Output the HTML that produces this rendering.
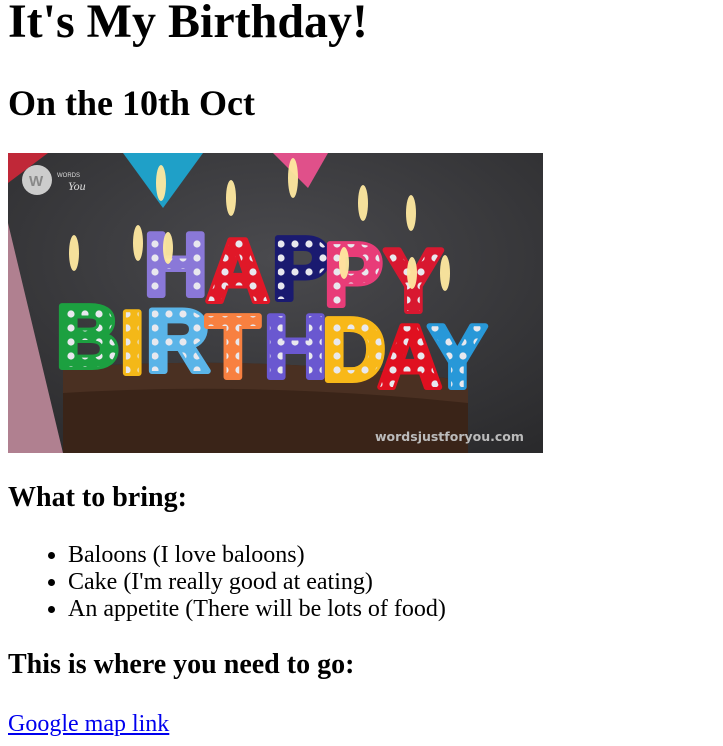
<!DOCTYPE html>
<html><head><style>
html,body{margin:0;padding:0;background:#fff;}
body{width:723px;height:746px;position:relative;overflow:hidden;font-family:"Liberation Serif",serif;color:#000;}
.t{position:absolute;left:8px;line-height:1;white-space:nowrap;margin:0;}
ul{position:absolute;left:8px;top:542px;margin:0;padding-left:60px;font-size:24px;line-height:27px;}
a{color:#0000ee;}
</style></head><body>
<div class="t" style="top:-2px;font-size:48px;font-weight:bold">It's My Birthday!</div>
<div class="t" style="top:85px;font-size:36px;font-weight:bold">On the 10th Oct</div>
<svg style="position:absolute;left:8px;top:153px" width="535" height="300" viewBox="0 0 535 300">
<defs>
<radialGradient id="bg" cx="0.5" cy="0.35" r="0.8"><stop offset="0" stop-color="#4a4a4e"/><stop offset="1" stop-color="#2a2a2c"/></radialGradient>
<pattern id="dots" width="14" height="14" patternUnits="userSpaceOnUse"><circle cx="7" cy="7" r="3.6" fill="#e8e8ee"/></pattern>
</defs>
<rect width="535" height="300" fill="url(#bg)"/>
<polygon points="0,70 55,300 0,300" fill="#b08090"/>
<polygon points="115,0 195,0 155,55" fill="#1fa0c8"/>
<polygon points="265,0 320,0 300,35" fill="#e0508a"/>
<polygon points="0,0 40,0 0,30" fill="#c02838"/>
<path d="M55,215 Q250,200 460,228 L460,300 L55,300 Z" fill="#3a2418"/>
<path d="M55,215 Q250,200 460,228 L460,250 Q250,228 55,240 Z" fill="#4a3022"/>
<circle cx="29" cy="27" r="15" fill="#ccc"/>
<text x="21" y="33" font-family="Liberation Sans" font-size="15" font-weight="bold" fill="#888">W</text>
<text x="49" y="24" font-family="Liberation Sans" font-size="6" fill="#ddd">WORDS</text>
<text x="60" y="37" font-family="Liberation Serif" font-size="12" font-style="italic" fill="#ddd">You</text>
<g font-family="Liberation Sans" font-weight="bold" font-size="88" stroke-width="6" stroke-linejoin="round">
<text x="136" y="142" fill="#8a78d8" stroke="#8a78d8">H</text>
<text x="198" y="148" fill="#e01828" stroke="#e01828">A</text>
<text x="264" y="146" fill="#1a1a70" stroke="#1a1a70">P</text>
<text x="316" y="152" fill="#e83c78" stroke="#e83c78">P</text>
<text x="376" y="158" fill="#d81830" stroke="#d81830">Y</text>
<text x="48" y="214" fill="#1ca040" stroke="#1ca040">B</text>
<text x="112" y="220" fill="#f4b818" stroke="#f4b818">I</text>
<text x="138" y="218" fill="#5ab4e8" stroke="#5ab4e8">R</text>
<text x="198" y="224" fill="#f88040" stroke="#f88040">T</text>
<text x="256" y="224" fill="#6a58d0" stroke="#6a58d0">H</text>
<text x="314" y="227" fill="#f8b818" stroke="#f8b818">D</text>
<text x="370" y="234" fill="#e01020" stroke="#e01020">A</text>
<text x="420" y="234" fill="#2898d8" stroke="#2898d8">Y</text>
</g>
<g font-family="Liberation Sans" font-weight="bold" font-size="88" fill="url(#dots)">
<text x="136" y="142">H</text><text x="198" y="148">A</text><text x="264" y="146">P</text>
<text x="316" y="152">P</text><text x="376" y="158">Y</text><text x="48" y="214">B</text>
<text x="112" y="220">I</text><text x="138" y="218">R</text><text x="198" y="224">T</text>
<text x="256" y="224">H</text><text x="314" y="227">D</text><text x="370" y="234">A</text>
<text x="420" y="234">Y</text>
</g>
<g fill="#ffe9a0" opacity="0.95">
<ellipse cx="66" cy="100" rx="5" ry="18"/><ellipse cx="130" cy="90" rx="5" ry="18"/>
<ellipse cx="153" cy="30" rx="5" ry="18"/><ellipse cx="223" cy="45" rx="5" ry="18"/>
<ellipse cx="285" cy="25" rx="5" ry="20"/><ellipse cx="355" cy="50" rx="5" ry="18"/>
<ellipse cx="403" cy="60" rx="5" ry="18"/><ellipse cx="437" cy="120" rx="5" ry="18"/>
<ellipse cx="160" cy="95" rx="5" ry="16"/><ellipse cx="336" cy="110" rx="5" ry="16"/>
<ellipse cx="404" cy="120" rx="5" ry="16"/>
</g>
<text x="367" y="288" font-family="DejaVu Sans" font-weight="bold" font-size="12.5" fill="#bbb">wordsjustforyou.com</text>
</svg>
<div class="t" style="top:484px;font-size:28px;font-weight:bold">What to bring:</div>
<ul>
<li>Baloons (I love baloons)</li>
<li>Cake (I'm really good at eating)</li>
<li>An appetite (There will be lots of food)</li>
</ul>
<div class="t" style="top:651px;font-size:28px;font-weight:bold">This is where you need to go:</div>
<div class="t" style="top:712px;font-size:24px"><a href="#">Google map link</a></div>
</body></html>
